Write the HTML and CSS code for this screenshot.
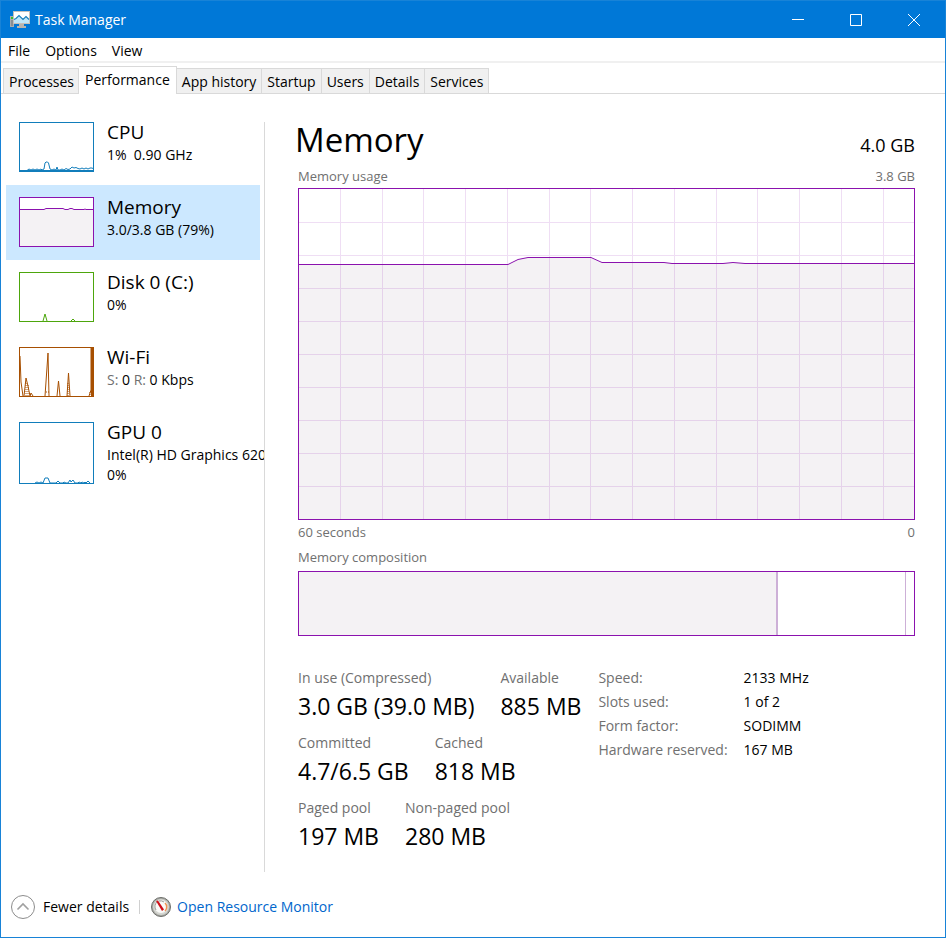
FILE: index.html
```html
<!DOCTYPE html>
<html lang="en">
<head>
<meta charset="utf-8">
<meta name="viewport" content="width=device-width, initial-scale=1">
<title>Task Manager</title>
<link rel="stylesheet" href="styles.css">
</head>
<body>
<div class="window">
  <header class="titlebar">
    <svg class="app-icon" width="20" height="18" viewBox="0 0 20 18" aria-hidden="true">
      <path d="M0 5h4v11H0z" fill="#a9adb0"/>
      <path d="M1 6h3v2H1z" fill="#35c12a"/>
      <path d="M1 9h2v6H1z" fill="#8a8f93"/>
      <path d="M9 13h5v2h2v2H7v-2h2z" fill="#b9b4ae"/>
      <path d="M3 0h17v13H3z" fill="#c4c0ba"/>
      <path d="M4 1h15v11H4z" fill="#fff"/>
      <path d="M4 8l2-1 3-3 4 4 3-3 3 3v4H4z" fill="#bfe6f8"/>
      <path d="M4 8.500l2-1 3-3 4 4 3-3 3 3" fill="none" stroke="#1c81bd" stroke-width="1.200"/>
    </svg>
    <h1 class="app-title">Task Manager</h1>
    <div class="window-controls">
      <button type="button" aria-label="Minimize"><svg width="12" height="12" viewBox="0 0 12 12"><path d="M0 5.500h12"/></svg></button>
      <button type="button" aria-label="Maximize"><svg width="12" height="12" viewBox="0 0 12 12"><path d="M.5.5h11v11H.5z"/></svg></button>
      <button type="button" aria-label="Close"><svg width="12" height="12" viewBox="0 0 12 12"><path d="M0 0l12 12M12 0L0 12"/></svg></button>
    </div>
  </header>

  <nav class="menubar" aria-label="Menu">
    <button type="button">File</button>
    <button type="button">Options</button>
    <button type="button">View</button>
  </nav>

  <div class="tabs" role="tablist">
    <button type="button" role="tab">Processes</button>
    <button type="button" role="tab" class="active" aria-selected="true">Performance</button>
    <button type="button" role="tab">App history</button>
    <button type="button" role="tab">Startup</button>
    <button type="button" role="tab">Users</button>
    <button type="button" role="tab">Details</button>
    <button type="button" role="tab">Services</button>
  </div>

  <div class="content">
    <aside class="sidebar">
      <button type="button" class="resource">
        <svg class="thumb cpu" viewBox="0 0 73 48" aria-hidden="true"><path d="M0 47.500h7l2-1.500 2 1 2-1 2 1 2-1 2 1 2-1 1 1 2-1 1-6 1-1h1.500l1 1 1.500 6 2 1 2-1 2 1 1-3 1 3h2l2-1 2 1 2-1.500 2 1 2-.5 2-2 2 1 2-.5 2 1 2 .5 2-1 2 1 2-1 2 1 2-1 2 0 2 1 2-1"/><path d="M0 47.500h73"/></svg>
        <span class="resource-text"><span class="resource-name">CPU</span><span>1%&nbsp; 0.90 GHz</span></span>
      </button>
      <button type="button" class="resource selected" aria-current="true">
        <svg class="thumb memory" viewBox="0 0 73 48" aria-hidden="true"><path class="area" d="M-1 11.500H24l2-1H43l2 1h3l2-1h2l2 1H64l1-.5 1 .5h8V49H-1z"/></svg>
        <span class="resource-text"><span class="resource-name">Memory</span><span>3.0/3.8 GB (79%)</span></span>
      </button>
      <button type="button" class="resource">
        <svg class="thumb disk" viewBox="0 0 73 48" aria-hidden="true"><path d="M23 48l2-7 2 7M51 48l2-2 2 2"/></svg>
        <span class="resource-text"><span class="resource-name">Disk 0 (C:)</span><span>0%</span></span>
      </button>
      <button type="button" class="resource">
        <svg class="thumb wifi" viewBox="0 0 73 48" aria-hidden="true"><path d="M0 8l1 26 2 14M4 48l2-18 2 8 2 10 1-3 2 3M25 48l3-43 1 43M37 48l1.500-15L40 48M47 48l1.500-23L50 48M69 48l2-6V0"/><path class="dash" d="M6 48V34M8 48V36M26 44h3M48 48V34M70 44v4"/><path class="bar" d="M72 0v48"/></svg>
        <span class="resource-text"><span class="resource-name">Wi-Fi</span><span><i>S:</i> 0 <i>R:</i> 0 Kbps</span></span>
      </button>
      <button type="button" class="resource tall">
        <svg class="thumb gpu" viewBox="0 0 73 60" aria-hidden="true"><path d="M15 60l2-1 2 1 2-1 2 1 2-5h3l2 5h6l2-2 2 2h3l1-1 2 1h2l2-3 1 2 2-2 2 3h3l1-1 2 1 1-1 2 1 1-1 1 1 2-2 2 2"/></svg>
        <span class="resource-text"><span class="resource-name">GPU 0</span><span>Intel(R) HD Graphics 620</span><span>0%</span></span>
      </button>
    </aside>

    <main class="detail">
      <div class="heading"><h2>Memory</h2><span>4.0 GB</span></div>
      <div class="caption"><span>Memory usage</span><span>3.8 GB</span></div>
      <svg class="usage-chart" viewBox="0 0 615 330" preserveAspectRatio="none" role="img" aria-label="Memory usage over 60 seconds">
        <path class="fill" d="M-1 75.500H209L219 70.500 229 68.500H292L303 73.500H365L373 74.500H424L434 73.500 446 74.500H616V331H-1z"/>
        <path class="grid" d="M41.500 0v330M83.500 0v330M124.500 0v330M166.500 0v330M208.500 0v330M250.500 0v330M291.500 0v330M333.500 0v330M375.500 0v330M417.500 0v330M458.500 0v330M500.500 0v330M542.500 0v330M584.500 0v330M0 33.500h615M0 66.500h615M0 99.500h615M0 132.500h615M0 165.500h615M0 198.500h615M0 231.500h615M0 264.500h615M0 297.500h615"/>
        <path class="line" d="M-1 75.500H209L219 70.500 229 68.500H292L303 73.500H365L373 74.500H424L434 73.500 446 74.500H616"/>
      </svg>
      <div class="caption axis"><span>60 seconds</span><span>0</span></div>
      <div class="caption spaced"><span>Memory composition</span></div>
      <div class="composition" role="img" aria-label="Memory composition"><div class="used"></div><div class="standby"></div><div class="free"></div></div>

      <div class="stats">
        <div class="counters">
          <dl><div><dt>In use (Compressed)</dt><dd>3.0 GB (39.0 MB)</dd></div><div><dt>Available</dt><dd>885 MB</dd></div></dl>
          <dl><div><dt>Committed</dt><dd>4.7/6.5 GB</dd></div><div><dt>Cached</dt><dd>818 MB</dd></div></dl>
          <dl><div><dt>Paged pool</dt><dd>197 MB</dd></div><div><dt>Non-paged pool</dt><dd>280 MB</dd></div></dl>
        </div>
        <table class="hardware">
          <tr><th scope="row">Speed:</th><td>2133 MHz</td></tr>
          <tr><th scope="row">Slots used:</th><td>1 of 2</td></tr>
          <tr><th scope="row">Form factor:</th><td>SODIMM</td></tr>
          <tr><th scope="row">Hardware reserved:</th><td>167 MB</td></tr>
        </table>
      </div>
    </main>
  </div>

  <footer class="footer">
    <button type="button" class="fewer">
      <svg width="24" height="24" viewBox="0 0 24 24" aria-hidden="true"><circle cx="12" cy="12" r="11.500" fill="#fff" stroke="#8c8c8c"/><path d="M6.500 14.500L12 9l5.500 5.500" fill="none" stroke="#a0a0a0" stroke-width="1.600"/></svg>
      Fewer details
    </button>
    <span class="separator"></span>
    <a class="monitor" href="#">
      <svg width="20" height="20" viewBox="0 0 20 20" aria-hidden="true">
        <circle cx="10" cy="10" r="9.500" fill="#a9aaa5" stroke="#6d6e6a"/>
        <circle cx="10" cy="10" r="8" fill="#d5d6d1"/>
        <circle cx="10" cy="9.500" r="6.500" fill="#fafaf8"/>
        <path d="M5 13a6 6 0 0 1 1-8M8 4a6 6 0 0 1 5 1" fill="none" stroke="#9b9b96"/>
        <path d="M14 6a5.500 5.500 0 0 1 0 8" fill="none" stroke="#ef9252" stroke-width="1.500"/>
        <path d="M5 4l2-.5 6 9-2 1.500z" fill="#cf1019"/>
      </svg>
      Open Resource Monitor
    </a>
  </footer>
</div>
</body>
</html>
```
FILE: styles.css
```css
* { box-sizing: border-box; }

body {
  margin: 0;
  background: #fff;
  color: #000;
  font: 14px/20px "Open Sans", "Noto Sans", sans-serif;
}

button {
  margin: 0;
  padding: 0;
  border: 0;
  background: none;
  color: inherit;
  font: inherit;
  text-align: left;
}

svg { display: block; flex: none; }

.window {
  display: flex;
  flex-direction: column;
  min-height: 100vh;
  border: 1px solid #1883d7;
}

.titlebar {
  display: flex;
  align-items: center;
  height: 37px;
  padding: 0 2px 0 9px;
  gap: 5px;
  background: #0078d7;
  color: #fff;
}
.app-title { flex: 1; margin: 0; font-size: 14px; font-weight: 400; }
.window-controls { display: flex; }
.window-controls button { display: grid; place-items: center; width: 58px; height: 36px; }
.window-controls path { fill: none; stroke: #fff; }

.menubar {
  display: flex;
  gap: 15px;
  height: 25px;
  padding: 2px 7px 0;
  border-bottom: 2px solid #f0f0f0;
}

.tabs {
  display: flex;
  align-items: flex-end;
  height: 31px;
  padding-left: 2px;
  box-shadow: inset 0 -1px #d9d9d9;
}
.tabs button {
  height: 26px;
  padding: 2px 5px 0;
  border: 1px solid #d9d9d9;
  border-left-width: 0;
  background: #f0f0f0;
}
.tabs button:first-child { padding-right: 4px; border-left-width: 1px; }
.tabs .active {
  height: 28px;
  padding: 0 6px 2px;
  border-bottom: 0;
  background: #fff;
}

.content { display: flex; flex: 1; }

.sidebar {
  flex: none;
  width: 264px;
  padding: 16px 0 0 5px;
  background: linear-gradient(#d9d9d9, #d9d9d9) right 28px / 1px no-repeat;
}
.resource {
  display: flex;
  gap: 13px;
  width: 254px;
  height: 75px;
  padding: 12px 0 0 13px;
}
.resource.tall { width: 258px; height: 87px; overflow: hidden; }
.resource.selected { background: #cce8ff; }
.resource-text { display: flex; flex-direction: column; white-space: nowrap; }
.resource-name { margin-bottom: 3px; font-size: 19px; line-height: 20px; }
.resource i { color: #707070; font-style: normal; }

.thumb {
  width: 75px;
  height: 50px;
  border: 1px solid;
  background: #fff;
}
.thumb path { fill: none; stroke: currentColor; }
.thumb .area { fill: #f4f2f4; }
.cpu, .gpu { color: #117dbb; }
.gpu { height: 62px; }
.memory { color: #8b12ae; }
.disk { color: #4da60c; }
.wifi { color: #a74f01; }
.thumb .dash { stroke-dasharray: 1 1; }
.thumb .bar { stroke-width: 2; }

.detail {
  display: flex;
  flex: 1;
  flex-direction: column;
  padding: 26px 30px 0;
}
.heading { display: flex; justify-content: space-between; align-items: baseline; line-height: 40px; }
.heading h2 { margin: 0; font-size: 33px; font-weight: 400; }
.heading span { font-size: 18px; line-height: 38px; }
.caption, .usage-chart, .composition, .stats { margin-left: 3px; }
.caption {
  display: flex;
  justify-content: space-between;
  padding: 2px 0;
  color: #707070;
  font-size: 13px;
  line-height: 20px;
}
.caption.axis { padding-bottom: 0; }
.caption.spaced { padding: 5px 0 4px; }
.usage-chart {
  flex: 1 0 332px;
  min-height: 0;
  border: 1px solid #8b12ae;
}
.usage-chart path { fill: none; vector-effect: non-scaling-stroke; }
.usage-chart .fill { fill: #f4f2f4; }
.usage-chart .grid { stroke: #8b12ae; stroke-opacity: .14; shape-rendering: crispEdges; }
.usage-chart .line { stroke: #8b12ae; }

.composition { display: flex; height: 65px; border: 1px solid #8b12ae; }
.used { flex: 479; border-right: 2px solid #cdb0d7; background: #f4f2f4; }
.standby { flex: 128; border-right: 1px solid #cdb0d7; }
.free { flex: 8; }

.stats { display: flex; gap: 17px; padding: 30px 0 11px; }
.counters { flex: none; }
.counters dl { display: flex; gap: 26px; height: 65px; margin: 0; }
.counters dt { color: #707070; line-height: 24px; }
.counters dd { margin: 1px 0 0; font-size: 23px; line-height: 30px; }
.hardware { align-self: flex-start; border-collapse: collapse; line-height: 24px; white-space: nowrap; }
.hardware th { padding: 0 16px 0 0; color: #707070; font-weight: 400; text-align: left; }
.hardware td { padding: 0; }

.footer { display: flex; align-items: center; height: 65px; padding: 5px 10px 0; }
.fewer, .monitor { display: flex; align-items: center; gap: 8px; }
.monitor { gap: 6px; color: #0066cc; text-decoration: none; }
.separator { width: 1px; height: 14px; margin: 0 11px 0 10px; background: #d0d0d0; }
```
